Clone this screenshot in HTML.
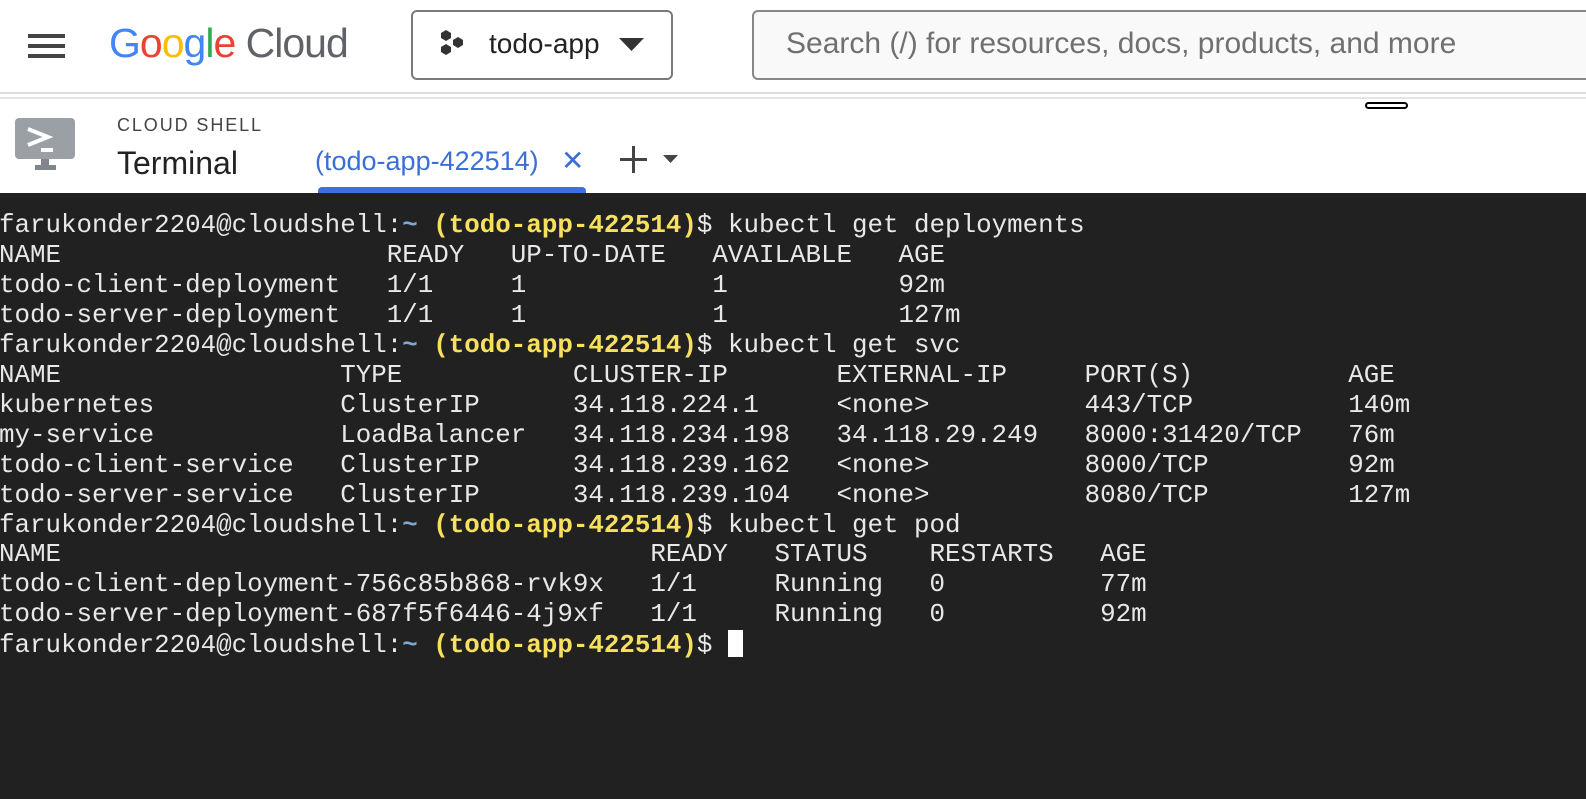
<!DOCTYPE html>
<html><head><meta charset="utf-8"><style>
*{margin:0;padding:0;box-sizing:border-box}
body{width:1586px;height:799px;overflow:hidden;background:#fff;font-family:"Liberation Sans",sans-serif;position:relative}
.abs{position:absolute}
.term{position:absolute;left:0;top:193px;width:1586px;height:606px;background:#212121}
pre{position:absolute;left:-1px;top:211px;font-family:"Liberation Mono",monospace;font-size:25.85px;line-height:29.95px;color:#e8e8e8;white-space:pre}
.y{color:#f7e15c;font-weight:bold}
.t{color:#7ea6d6;font-weight:bold}
.cur{display:inline-block;width:15px;height:27px;background:#fff;vertical-align:-5px}
</style></head><body>
<div class="abs" style="left:28px;top:34px;width:37px;height:4px;background:#444"></div>
<div class="abs" style="left:28px;top:44px;width:37px;height:4px;background:#444"></div>
<div class="abs" style="left:28px;top:54px;width:37px;height:4px;background:#444"></div>
<div class="abs" style="left:109px;top:20px;font-size:41px;letter-spacing:-1px;"><span style="color:#4285f4">G</span><span style="color:#ea4335">o</span><span style="color:#fbbc05">o</span><span style="color:#4285f4">g</span><span style="color:#34a853">l</span><span style="color:#ea4335">e</span><span style="color:#5f6368"> Cloud</span></div>
<div class="abs" style="left:411px;top:10px;width:262px;height:70px;border:2px solid #7a7a7a;border-radius:6px"></div>
<svg class="abs" style="left:440px;top:29px" width="30" height="30" viewBox="0 0 30 30"><polygon points="6,1 11,4 11,9 6,12 1,9 1,4" fill="#333"/><polygon points="6,15 11,18 11,23 6,26 1,23 1,18" fill="#333"/><polygon points="18,8 23,11 23,16 18,19 13,16 13,11" fill="#333"/></svg>
<div class="abs" style="left:489px;top:28px;font-size:28px;color:#222">todo-app</div>
<svg class="abs" style="left:619px;top:38px" width="25" height="14"><polygon points="0,0 25,0 12.5,13" fill="#333"/></svg>
<div class="abs" style="left:752px;top:10px;width:900px;height:70px;border:2px solid #888;border-radius:6px;background:#f9f9f9"></div>
<div class="abs" style="left:786px;top:27px;font-size:30px;color:#707070">Search (/) for resources, docs, products, and more</div>
<div class="abs" style="left:0;top:92px;width:1586px;height:2px;background:#ddd"></div>
<div class="abs" style="left:0;top:97px;width:1586px;height:2px;background:#e4e4e4"></div>
<div class="abs" style="left:1365px;top:102px;width:43px;height:7px;border:2px solid #000;border-radius:4px"></div>
<svg class="abs" style="left:15px;top:118px" width="60" height="54" viewBox="0 0 60 54"><rect x="0" y="0" width="60" height="41" rx="4" fill="#9aa0a6"/><path d="M13 11 L33 19 L13 27" stroke="#fff" stroke-width="4" fill="none"/><rect x="26" y="30" width="12" height="4" fill="#fff"/><rect x="26" y="41" width="8" height="6" fill="#80868b"/><rect x="20" y="47" width="21" height="5" fill="#80868b"/></svg>
<div class="abs" style="left:117px;top:115px;font-size:18px;letter-spacing:1.9px;color:#444">CLOUD SHELL</div>
<div class="abs" style="left:117px;top:145px;font-size:32px;color:#222">Terminal</div>
<div class="abs" style="left:315px;top:146px;font-size:27px;color:#3c6fd6">(todo-app-422514)</div>
<div class="abs" style="left:561px;top:144px;font-size:28px;color:#3c6fd6">✕</div>
<div class="abs" style="left:318px;top:187px;width:268px;height:8px;background:#3871e0;border-radius:4px 4px 0 0"></div>
<div class="abs" style="left:620px;top:158px;width:27px;height:3px;background:#444"></div>
<div class="abs" style="left:632px;top:146px;width:3px;height:27px;background:#444"></div>
<svg class="abs" style="left:663px;top:155px" width="15" height="8"><polygon points="0,0 15,0 7.5,8" fill="#444"/></svg>
<div class="term"></div>
<pre>farukonder2204@cloudshell:<span class="t">~</span> <span class="y">(todo-app-422514)</span>$ kubectl get deployments
NAME                     READY   UP-TO-DATE   AVAILABLE   AGE
todo-client-deployment   1/1     1            1           92m
todo-server-deployment   1/1     1            1           127m
farukonder2204@cloudshell:<span class="t">~</span> <span class="y">(todo-app-422514)</span>$ kubectl get svc
NAME                  TYPE           CLUSTER-IP       EXTERNAL-IP     PORT(S)          AGE
kubernetes            ClusterIP      34.118.224.1     &lt;none&gt;          443/TCP          140m
my-service            LoadBalancer   34.118.234.198   34.118.29.249   8000:31420/TCP   76m
todo-client-service   ClusterIP      34.118.239.162   &lt;none&gt;          8000/TCP         92m
todo-server-service   ClusterIP      34.118.239.104   &lt;none&gt;          8080/TCP         127m
farukonder2204@cloudshell:<span class="t">~</span> <span class="y">(todo-app-422514)</span>$ kubectl get pod
NAME                                      READY   STATUS    RESTARTS   AGE
todo-client-deployment-756c85b868-rvk9x   1/1     Running   0          77m
todo-server-deployment-687f5f6446-4j9xf   1/1     Running   0          92m
farukonder2204@cloudshell:<span class="t">~</span> <span class="y">(todo-app-422514)</span>$ <span class="cur"></span></pre>
</body></html>
